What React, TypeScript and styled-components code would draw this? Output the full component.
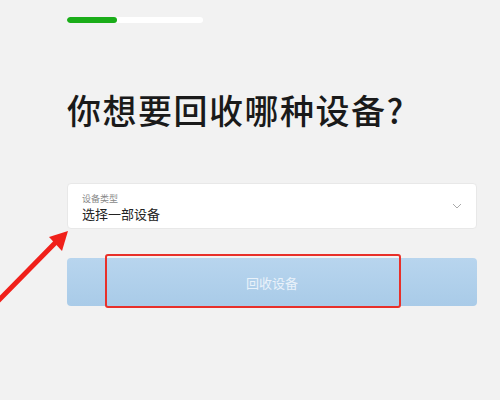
import styled, { createGlobalStyle } from 'styled-components'

const GlobalStyle = createGlobalStyle`
  html, body {
    margin: 0;
    padding: 0;
    background: #f2f2f2;
    font-family: "Noto Sans CJK SC", "Noto Sans", sans-serif;
  }
`

const Page = styled.div`
  position: relative;
  width: 500px;
  height: 400px;
  overflow: hidden;
  padding: 17px 23px 0 67px;
  box-sizing: border-box;
`

const Track = styled.div`
  width: 136px;
  height: 6px;
  border-radius: 3px;
  background: #fff;
  overflow: hidden;
`

const Fill = styled.div<{ $pct: number }>`
  width: ${(p) => p.$pct}%;
  height: 100%;
  border-radius: 3px;
  background: #1aad19;
`

const Title = styled.h1`
  margin: 67px 0 0;
  font-size: 34px;
  line-height: 40px;
  font-weight: 500;
  color: #1a1a1a;
  letter-spacing: 1.5px;
`

const Select = styled.div`
  margin-top: 53px;
  height: 46px;
  box-sizing: border-box;
  background: #fff;
  border: 1px solid #e8e8e8;
  border-radius: 4px;
  padding: 0 14px;
  display: flex;
  align-items: center;
  justify-content: space-between;
`

const Labels = styled.div`
  display: flex;
  flex-direction: column;
  padding-top: 2px;
`

const Caption = styled.span`
  font-size: 9px;
  line-height: 12px;
  color: #888;
`

const Value = styled.span`
  font-size: 13px;
  line-height: 17px;
  color: #222;
`

const Chevron = styled.svg`
  width: 10px;
  height: 6px;
`

const Button = styled.div`
  position: relative;
  margin-top: 29px;
  height: 48px;
  border-radius: 4px;
  background: linear-gradient(#b8d5ee, #a9cbe8);
  color: #e9f2fa;
  font-size: 13px;
  display: flex;
  align-items: center;
  justify-content: center;
`

const Highlight = styled.div`
  position: absolute;
  left: 38px;
  top: -4px;
  width: 296px;
  height: 54px;
  box-sizing: border-box;
  border: 2px solid #e8302a;
  border-radius: 3px;
`

const Arrow = styled.svg`
  position: absolute;
  left: 0;
  top: 225px;
  width: 75px;
  height: 80px;
`

export default function App() {
  return (
    <>
      <GlobalStyle />
      <Page>
        <Track>
          <Fill $pct={37} />
        </Track>
        <Title>你想要回收哪种设备?</Title>
        <Select>
          <Labels>
            <Caption>设备类型</Caption>
            <Value>选择一部设备</Value>
          </Labels>
          <Chevron viewBox="0 0 10 6">
            <path d="M1 1l4 4 4-4" fill="none" stroke="#aaa" strokeWidth="1" />
          </Chevron>
        </Select>
        <Button>
          回收设备
          <Highlight />
        </Button>
        <Arrow viewBox="0 0 75 80">
          <path d="M-3 77 L58 15" stroke="#f0201a" strokeWidth="5" strokeLinecap="round" />
          <polygon points="68,6 49,12 62,26" fill="#f0201a" />
        </Arrow>
      </Page>
    </>
  )
}
